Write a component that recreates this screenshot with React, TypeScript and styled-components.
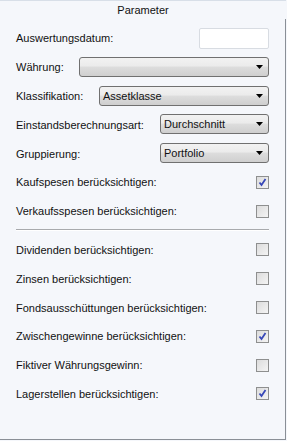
import React from "react";
import styled, { createGlobalStyle } from "styled-components";

const GlobalStyle = createGlobalStyle`
  html, body { margin: 0; padding: 0; background: #f5f7fb; }
  body { font-family: "Liberation Sans", Arial, sans-serif; }
`;

type Row =
  | { kind: "check"; label: string; checked: boolean }
  | { kind: "sep" };

const upper: Row[] = [
  { kind: "check", label: "Kaufspesen berücksichtigen:", checked: true },
  { kind: "check", label: "Verkaufsspesen berücksichtigen:", checked: false },
  { kind: "sep" },
  { kind: "check", label: "Dividenden berücksichtigen:", checked: false },
  { kind: "check", label: "Zinsen berücksichtigen:", checked: false },
  { kind: "check", label: "Fondsausschüttungen berücksichtigen:", checked: false },
  { kind: "check", label: "Zwischengewinne berücksichtigen:", checked: true },
  { kind: "check", label: "Fiktiver Währungsgewinn:", checked: false },
  { kind: "check", label: "Lagerstellen berücksichtigen:", checked: true },
];

const Arrow = () => (
  <svg width="7" height="4" viewBox="0 0 7 4">
    <path d="M0 0h7L3.5 4z" fill="#000" />
  </svg>
);

const Tick = () => (
  <svg width="9" height="9" viewBox="0 0 9 9">
    <path d="M1.5 4.5l2 2.5 4-6" stroke="#3848b8" strokeWidth="1.8" fill="none" />
  </svg>
);

const App: React.FC = () => (
  <>
    <GlobalStyle />
    <Panel>
      <Title>Parameter</Title>
      <Body>
        <FieldRow>
          <Label>Auswertungsdatum:</Label>
          <TextBox />
        </FieldRow>
        <FieldRow>
          <Label>Währung:</Label>
          <Select $left={79}>
            <span />
            <Arrow />
          </Select>
        </FieldRow>
        <FieldRow>
          <Label>Klassifikation:</Label>
          <Select $left={99}>
            <span>Assetklasse</span>
            <Arrow />
          </Select>
        </FieldRow>
        <FieldRow>
          <Label>Einstandsberechnungsart:</Label>
          <Select $left={160}>
            <span>Durchschnitt</span>
            <Arrow />
          </Select>
        </FieldRow>
        <FieldRow>
          <Label>Gruppierung:</Label>
          <Select $left={160}>
            <span>Portfolio</span>
            <Arrow />
          </Select>
        </FieldRow>
        {upper.map((r, i) =>
          r.kind === "sep" ? (
            <Separator key={i} />
          ) : (
            <FieldRow key={i}>
              <Label>{r.label}</Label>
              <CheckBox>{r.checked && <Tick />}</CheckBox>
            </FieldRow>
          )
        )}
      </Body>
    </Panel>
  </>
);

export default App;

const Panel = styled.div`
  width: 286px;
  height: 441px;
  box-sizing: border-box;
  display: flex;
  flex-direction: column;
  background: #f5f7fb;
  border-top: 1px solid #d8dfe8;
  overflow: hidden;
  color: #111;
  font-size: 11px;
`;
const Title = styled.div`
  height: 17px;
  line-height: 17px;
  text-align: center;
  margin-top: 1px;
`;
const Body = styled.div`
  flex: 1;
  display: flex;
  flex-direction: column;
  padding: 5px 16px 0 16px;
  border-right: 1px solid #8a8f96;
  border-bottom: 1px solid #8a8f96;
  margin-bottom: 1px;
`;
const FieldRow = styled.div`
  display: flex;
  align-items: center;
  justify-content: space-between;
  height: 28.8px;
  position: relative;
`;
const Label = styled.span`
  white-space: nowrap;
`;
const TextBox = styled.div`
  width: 68px;
  height: 19px;
  background: #fff;
  border: 1px solid #d8dce2;
  border-radius: 2px;
`;
const Select = styled.div<{ $left: number }>`
  position: absolute;
  left: ${(p) => p.$left - 16}px;
  right: 0;
  top: 4px;
  height: 18px;
  border: 1px solid #707070;
  border-radius: 3px;
  background: linear-gradient(#f2f2f2 0%, #ebebeb 45%, #dddddd 50%, #cfcfcf 100%);
  display: flex;
  align-items: center;
  justify-content: space-between;
  padding: 0 5px 0 3px;
`;
const CheckBox = styled.div`
  width: 11px;
  height: 11px;
  border: 1px solid #8e8f8f;
  background: linear-gradient(135deg, #dcdcdc, #f4f4f4);
  display: flex;
  align-items: center;
  justify-content: center;
`;
const Separator = styled.div`
  height: 1px;
  background: #a8aaad;
  margin: 3px 0 5px 0;
  border-bottom: 1px solid #ffffff;
`;
